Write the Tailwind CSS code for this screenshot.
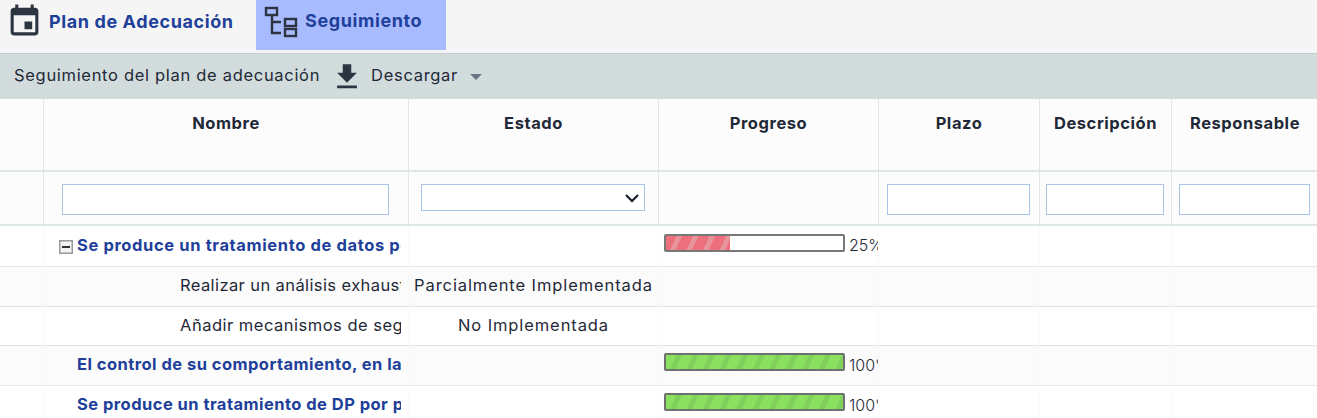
<!DOCTYPE html>
<html lang="es">
<head>
  <meta charset="UTF-8">
  <title>Seguimiento</title>
  <script src="https://cdn.jsdelivr.net/npm/@tailwindcss/browser@4"></script>
</head>
<body class="h-[418px] w-[1317px] overflow-hidden bg-white font-['Inter',sans-serif] text-[16.5px] text-[#1f2937] tracking-[0.9px]">

  <!-- tabs -->
  <nav class="flex h-[54px] items-start border-b border-[#c3ced3] bg-[#f5f5f5] font-bold text-[#1e3f9a] text-[18px] tracking-[0.6px]">
    <a class="flex h-[50px] w-[256px] items-center pl-[6px] pb-[8px]">
      <svg class="h-[37px] w-[37px] text-[#2b3440]" viewBox="0 0 24 24" fill="currentColor"><path d="M17 12h-5v5h5v-5zM16 1v2H8V1H6v2H5c-1.11 0-1.99.9-1.99 2L3 19c0 1.1.89 2 2 2h14c1.1 0 2-.9 2-2V5c0-1.1-.9-2-2-2h-1V1h-2zm3 18H5V8h14v11z"/></svg>
      <span class="ml-[6px]">Plan de Adecuación</span>
    </a>
    <a class="flex h-[50px] w-[190px] items-center bg-[#a8bbff] pl-[8px] pb-[6px]">
      <svg class="h-[32px] w-[34px] text-[#2b3440]" viewBox="0 0 34 32" fill="none" stroke="currentColor" stroke-width="2.4"><rect x="2" y="2" width="11" height="7"/><rect x="21" y="13" width="11" height="7"/><rect x="21" y="23" width="11" height="7"/><path d="M8 9v18h9M8 16h9"/></svg>
      <span class="ml-[7px] mb-[3px]">Seguimiento</span>
    </a>
  </nav>

  <!-- toolbar -->
  <div class="flex h-[45px] items-center bg-[#d2dcdd] pl-[14px] pb-[2px] tracking-[0.69px]">
    <span>Seguimiento del plan de adecuación</span>
    <svg class="ml-[10px] mt-[2px] h-[34px] w-[34px] text-[#2b3440]" viewBox="0 0 24 24" fill="currentColor"><path d="M19 9h-4V3H9v6H5l7 7 7-7zM5 18v2h14v-2H5z"/></svg>
    <span class="ml-[7px]">Descargar</span>
    <span class="ml-[12px] mt-[3px] h-0 w-0 border-x-[6px] border-t-[6px] border-x-transparent border-t-[#6b7280]"></span>
  </div>

  <!-- table -->
  <div class="grid grid-cols-[44px_365px_250px_220px_161px_132px_146px] grid-rows-[73px_54px_41px_40px_39px_40px_40px]">
    <!-- header -->
    <div class="border-r border-b-2 border-[#dfe6e8] bg-[#fcfcfc]"></div>
    <div class="border-r border-b-2 border-[#dfe6e8] bg-[#fcfcfc] pt-[12px] text-center font-bold tracking-[0.55px]">Nombre</div>
    <div class="border-r border-b-2 border-[#dfe6e8] bg-[#fcfcfc] pt-[12px] text-center font-bold tracking-[0.55px]">Estado</div>
    <div class="border-r border-b-2 border-[#dfe6e8] bg-[#fcfcfc] pt-[12px] text-center font-bold tracking-[0.55px]">Progreso</div>
    <div class="border-r border-b-2 border-[#dfe6e8] bg-[#fcfcfc] pt-[12px] text-center font-bold tracking-[0.55px]">Plazo</div>
    <div class="border-r border-b-2 border-[#dfe6e8] bg-[#fcfcfc] pt-[12px] text-center font-bold tracking-[0.55px]">Descripción</div>
    <div class="border-b-2 border-[#dfe6e8] bg-[#fcfcfc] pt-[12px] text-center font-bold tracking-[0.55px]">Responsable</div>

    <!-- filters -->
    <div class="border-r border-b-2 border-[#dfe6e8] bg-[#fcfcfc]"></div>
    <div class="border-r border-b-2 border-[#dfe6e8] bg-[#fcfcfc] pl-[18px] pt-[12px]"><input class="block h-[31px] w-[327px] border border-[#a9c4e4] bg-white"></div>
    <div class="border-r border-b-2 border-[#dfe6e8] bg-[#fcfcfc] pl-[12px] pt-[12px]">
      <div class="flex h-[27px] w-[224px] items-center justify-end border border-[#a9c4e4] bg-white pr-[5px]">
        <svg class="h-[10px] w-[14px]" viewBox="0 0 14 10" fill="none" stroke="#111827" stroke-width="2"><path d="M1 2l6 6 6-6"/></svg>
      </div>
    </div>
    <div class="border-r border-b-2 border-[#dfe6e8] bg-[#fcfcfc]"></div>
    <div class="border-r border-b-2 border-[#dfe6e8] bg-[#fcfcfc] pl-[8px] pt-[12px]"><input class="block h-[31px] w-[143px] border border-[#a9c4e4] bg-white"></div>
    <div class="border-r border-b-2 border-[#dfe6e8] bg-[#fcfcfc] pl-[6px] pt-[12px]"><input class="block h-[31px] w-[118px] border border-[#a9c4e4] bg-white"></div>
    <div class="border-b-2 border-[#dfe6e8] bg-[#fcfcfc] pl-[7px] pt-[12px]"><input class="block h-[31px] w-[131px] border border-[#a9c4e4] bg-white"></div>

    <!-- row 1 -->
    <div class="border-r border-b border-r-[#fafafa] border-b-[#e1e7e9]"></div>
    <div class="flex items-center overflow-hidden border-r border-b border-r-[#fafafa] border-b-[#e1e7e9] pb-[2px] pl-[15px] pr-[7px]">
      <svg class="mr-[4px] mt-[3px] h-[14px] w-[14px] shrink-0" viewBox="0 0 14 14"><rect x=".75" y=".75" width="12.5" height="12.5" fill="#f3f3f3" stroke="#9a9a9a" stroke-width="1.5"/><path d="M3 7h8" stroke="#333" stroke-width="2"/></svg>
      <span class="overflow-hidden whitespace-nowrap font-bold text-[#1e3f9a] tracking-[0.62px]">Se produce un tratamiento de datos personales</span>
    </div>
    <div class="border-r border-b border-r-[#fafafa] border-b-[#e1e7e9]"></div>
    <div class="flex items-start overflow-hidden border-r border-b border-r-[#fafafa] border-b-[#e1e7e9] pl-[5px] pt-[8px]">
      <div class="h-[18px] w-[181px] shrink-0 rounded-[2px] border-2 border-[#777] bg-white">
        <div class="h-full w-[64px] bg-[repeating-linear-gradient(115deg,#ec6f7b_0,#ec6f7b_9px,#e8949d_10px,#e8949d_14px,#ec6f7b_15px)]"></div>
      </div>
      <span class="ml-[4px] -mt-[1px] whitespace-nowrap text-[16px] tracking-normal font-light">25%</span>
    </div>
    <div class="border-r border-b border-r-[#fafafa] border-b-[#e1e7e9]"></div>
    <div class="border-r border-b border-r-[#fafafa] border-b-[#e1e7e9]"></div>
    <div class="border-b border-b-[#e1e7e9]"></div>

    <!-- row 2 -->
    <div class="border-r border-b border-r-[#f8f8f8] border-b-[#e1e7e9] bg-[#fbfbfb]"></div>
    <div class="flex items-center overflow-hidden border-r border-b border-r-[#f8f8f8] border-b-[#e1e7e9] bg-[#fbfbfb] pb-[2px] pl-[136px] pr-[7px]"><span class="overflow-hidden whitespace-nowrap tracking-[0.4px]">Realizar un análisis exhaustivo del tratamiento</span></div>
    <div class="flex items-center justify-center border-r border-b border-r-[#f8f8f8] border-b-[#e1e7e9] bg-[#fbfbfb] pb-[2px] whitespace-nowrap">Parcialmente Implementada</div>
    <div class="border-r border-b border-r-[#f8f8f8] border-b-[#e1e7e9] bg-[#fbfbfb]"></div>
    <div class="border-r border-b border-r-[#f8f8f8] border-b-[#e1e7e9] bg-[#fbfbfb]"></div>
    <div class="border-r border-b border-r-[#f8f8f8] border-b-[#e1e7e9] bg-[#fbfbfb]"></div>
    <div class="border-b border-b-[#e1e7e9] bg-[#fbfbfb]"></div>

    <!-- row 3 -->
    <div class="border-r border-b border-r-[#fafafa] border-b-[#e1e7e9]"></div>
    <div class="flex items-center overflow-hidden border-r border-b border-r-[#fafafa] border-b-[#e1e7e9] pb-[2px] pl-[136px] pr-[7px]"><span class="overflow-hidden whitespace-nowrap tracking-[0.5px]">Añadir mecanismos de seguridad adicionales</span></div>
    <div class="flex items-center justify-center border-r border-b border-r-[#fafafa] border-b-[#e1e7e9] pb-[2px] whitespace-nowrap">No Implementada</div>
    <div class="border-r border-b border-r-[#fafafa] border-b-[#e1e7e9]"></div>
    <div class="border-r border-b border-r-[#fafafa] border-b-[#e1e7e9]"></div>
    <div class="border-r border-b border-r-[#fafafa] border-b-[#e1e7e9]"></div>
    <div class="border-b border-b-[#e1e7e9]"></div>

    <!-- row 4 -->
    <div class="border-r border-b border-r-[#f8f8f8] border-b-[#e1e7e9] bg-[#fbfbfb]"></div>
    <div class="flex items-center overflow-hidden border-r border-b border-r-[#f8f8f8] border-b-[#e1e7e9] bg-[#fbfbfb] pb-[2px] pl-[33px] pr-[7px]"><span class="overflow-hidden whitespace-nowrap font-bold text-[#1e3f9a] tracking-[0.46px]">El control de su comportamiento, en la medida</span></div>
    <div class="border-r border-b border-r-[#f8f8f8] border-b-[#e1e7e9] bg-[#fbfbfb]"></div>
    <div class="flex items-start overflow-hidden border-r border-b border-r-[#f8f8f8] border-b-[#e1e7e9] bg-[#fbfbfb] pl-[5px] pt-[7px]">
      <div class="h-[18px] w-[181px] shrink-0 rounded-[2px] border-2 border-[#6f6f6f] bg-[repeating-linear-gradient(115deg,#8ae05f_0,#8ae05f_9px,#80d05b_10px,#80d05b_14px,#8ae05f_15px)]"></div>
      <span class="ml-[4px] whitespace-nowrap text-[16px] tracking-normal font-light">100%</span>
    </div>
    <div class="border-r border-b border-r-[#f8f8f8] border-b-[#e1e7e9] bg-[#fbfbfb]"></div>
    <div class="border-r border-b border-r-[#f8f8f8] border-b-[#e1e7e9] bg-[#fbfbfb]"></div>
    <div class="border-b border-b-[#e1e7e9] bg-[#fbfbfb]"></div>

    <!-- row 5 -->
    <div class="border-r border-r-[#fafafa]"></div>
    <div class="flex items-center overflow-hidden border-r border-r-[#fafafa] pb-[4px] pl-[33px] pr-[7px]"><span class="overflow-hidden whitespace-nowrap font-bold text-[#1e3f9a] tracking-[0.46px]">Se produce un tratamiento de DP por parte de</span></div>
    <div class="border-r border-r-[#fafafa]"></div>
    <div class="flex items-start overflow-hidden border-r border-r-[#fafafa] pl-[5px] pt-[7px]">
      <div class="h-[18px] w-[181px] shrink-0 rounded-[2px] border-2 border-[#6f6f6f] bg-[repeating-linear-gradient(115deg,#8ae05f_0,#8ae05f_9px,#80d05b_10px,#80d05b_14px,#8ae05f_15px)]"></div>
      <span class="ml-[4px] whitespace-nowrap text-[16px] tracking-normal font-light">100%</span>
    </div>
    <div class="border-r border-r-[#fafafa]"></div>
    <div class="border-r border-r-[#fafafa]"></div>
    <div></div>
  </div>
</body>
</html>
